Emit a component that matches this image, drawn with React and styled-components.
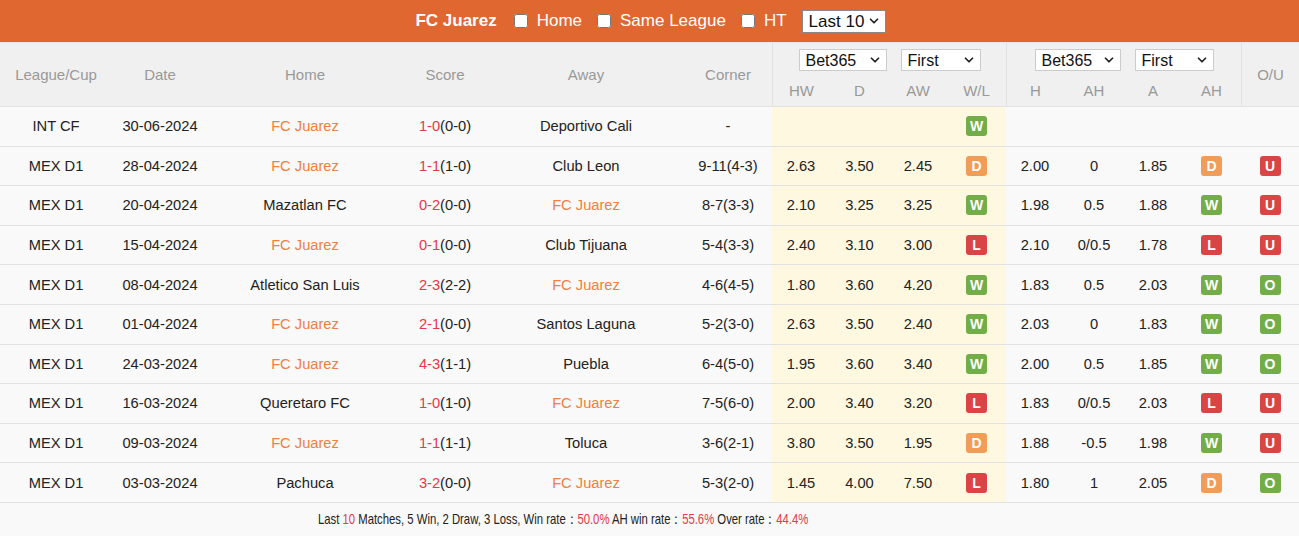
import { ChevronDown } from "lucide-react";
import styled, { createGlobalStyle } from "styled-components";

const COLS = "112px 96px 194px 86px 196px 88px 58px 59px 58px 59px 58px 60px 58px 59px 58px";

const GlobalStyle = createGlobalStyle`
  body {
    margin: 0;
    background: #ffffff;
    font-family: "Liberation Sans", Arial, sans-serif;
  }
`;

const Page = styled.div`
  width: 1299px;
  background: #f9f9f9;
`;

const TitleBar = styled.div`
  height: 42px;
  background: #e0672f;
  display: flex;
  align-items: center;
  justify-content: center;
  gap: 15px;
  color: #fff;
  font-size: 17px;
  padding-left: 2px;
`;

const TeamTitle = styled.span`
  font-weight: bold;
  margin-right: 2px;
`;

const Option = styled.label`
  display: inline-flex;
  align-items: center;
  gap: 9px;

  input {
    margin: 0;
    width: 14px;
    height: 14px;
  }
`;

const SelectWrap = styled.div`
  position: relative;
  width: ${(p) => p.$w}px;
  height: ${(p) => p.$h || 22}px;

  select {
    appearance: none;
    width: 100%;
    height: 100%;
    margin: 0;
    padding: 0 0 0 6px;
    border: 1px solid ${(p) => (p.$dark ? "#888" : "#cccccc")};
    background: #fff;
    color: #111;
    font-family: "Liberation Sans", Arial, sans-serif;
    font-size: ${(p) => p.$fs || 16}px;
    border-radius: 0;
  }

  svg {
    position: absolute;
    right: 5px;
    top: 50%;
    transform: translateY(-50%);
    pointer-events: none;
  }
`;

const HeaderGrid = styled.div`
  display: grid;
  grid-template-columns: ${COLS};
  grid-template-rows: 32px 31px;
  background: #f0f0f0;
  border-top: 1px solid #e6e6e6;
  border-bottom: 1px solid #e2e2e2;
  color: #999;
  font-size: 15px;
`;

const HeadCell = styled.div`
  grid-row: span 2;
  display: flex;
  align-items: center;
  justify-content: center;
  border-left: ${(p) => (p.$edge ? "1px solid #e2e2e2" : "none")};
`;

const GroupSelects = styled.div`
  grid-column: span 4;
  display: flex;
  align-items: flex-start;
  justify-content: center;
  gap: 14px;
  padding-top: 6px;
  border-left: 1px solid #e2e2e2;
`;

const SubHead = styled.div`
  display: flex;
  align-items: center;
  justify-content: center;
  border-left: ${(p) => (p.$edge ? "1px solid #e2e2e2" : "none")};
`;

const Row = styled.div`
  display: grid;
  grid-template-columns: ${COLS};
  height: 39.6px;
  box-sizing: border-box;
  border-bottom: 1px solid #e2e2e2;
  font-size: 14.7px;
  color: #222;
`;

const Cell = styled.div`
  display: flex;
  align-items: center;
  justify-content: center;
  white-space: nowrap;
  background: ${(p) => (p.$band ? "#fef8e1" : "transparent")};
  color: ${(p) => (p.$team ? "#f0803f" : "inherit")};
`;

const ScoreRed = styled.span`
  color: #e8374a;
`;

const BADGE = {
  W: "#72ad47",
  O: "#72ad47",
  D: "#f19d58",
  L: "#d94444",
  U: "#d94444",
};

const Badge = styled.span`
  display: inline-flex;
  align-items: center;
  justify-content: center;
  width: 21px;
  height: 20px;
  border-radius: 3px;
  background: ${(p) => BADGE[p.$v]};
  color: #fff;
  font-weight: bold;
  font-size: 14px;
`;

const Footer = styled.div`
  height: 33px;
  display: flex;
  align-items: center;
  padding-left: 318px;
  font-size: 14.5px;
  color: #222;
`;

/* the stats line is set in a condensed face in the original */
const Condensed = styled.span`
  display: inline-block;
  white-space: nowrap;
  transform: scaleX(0.78);
  transform-origin: left center;
`;

const Red = styled.span`
  color: #e8374a;
`;

const matches = [
  ["INT CF", "30-06-2024", "FC Juarez", "1-0", "(0-0)", "Deportivo Cali", "-", "", "", "", "W", "", "", "", "", "", "h"],
  ["MEX D1", "28-04-2024", "FC Juarez", "1-1", "(1-0)", "Club Leon", "9-11(4-3)", "2.63", "3.50", "2.45", "D", "2.00", "0", "1.85", "D", "U", "h"],
  ["MEX D1", "20-04-2024", "Mazatlan FC", "0-2", "(0-0)", "FC Juarez", "8-7(3-3)", "2.10", "3.25", "3.25", "W", "1.98", "0.5", "1.88", "W", "U", "a"],
  ["MEX D1", "15-04-2024", "FC Juarez", "0-1", "(0-0)", "Club Tijuana", "5-4(3-3)", "2.40", "3.10", "3.00", "L", "2.10", "0/0.5", "1.78", "L", "U", "h"],
  ["MEX D1", "08-04-2024", "Atletico San Luis", "2-3", "(2-2)", "FC Juarez", "4-6(4-5)", "1.80", "3.60", "4.20", "W", "1.83", "0.5", "2.03", "W", "O", "a"],
  ["MEX D1", "01-04-2024", "FC Juarez", "2-1", "(0-0)", "Santos Laguna", "5-2(3-0)", "2.63", "3.50", "2.40", "W", "2.03", "0", "1.83", "W", "O", "h"],
  ["MEX D1", "24-03-2024", "FC Juarez", "4-3", "(1-1)", "Puebla", "6-4(5-0)", "1.95", "3.60", "3.40", "W", "2.00", "0.5", "1.85", "W", "O", "h"],
  ["MEX D1", "16-03-2024", "Queretaro FC", "1-0", "(1-0)", "FC Juarez", "7-5(6-0)", "2.00", "3.40", "3.20", "L", "1.83", "0/0.5", "2.03", "L", "U", "a"],
  ["MEX D1", "09-03-2024", "FC Juarez", "1-1", "(1-1)", "Toluca", "3-6(2-1)", "3.80", "3.50", "1.95", "D", "1.88", "-0.5", "1.98", "W", "U", "h"],
  ["MEX D1", "03-03-2024", "Pachuca", "3-2", "(0-0)", "FC Juarez", "5-3(2-0)", "1.45", "4.00", "7.50", "L", "1.80", "1", "2.05", "D", "O", "a"],
];

const Select = ({ w, h, fs, dark, value }) => (
  <SelectWrap $w={w} $h={h} $fs={fs} $dark={dark}>
    <select defaultValue={value}>
      <option>{value}</option>
    </select>
    <ChevronDown size={14} strokeWidth={3} color="#222" />
  </SelectWrap>
);

const App = () => (
  <Page>
    <GlobalStyle />
    <TitleBar>
      <TeamTitle>FC Juarez</TeamTitle>
      <Option>
        <input type="checkbox" />
        Home
      </Option>
      <Option>
        <input type="checkbox" />
        Same League
      </Option>
      <Option>
        <input type="checkbox" />
        HT
      </Option>
      <Select w={84} h={23} fs={17} dark value="Last 10" />
    </TitleBar>

    <HeaderGrid>
      <HeadCell>League/Cup</HeadCell>
      <HeadCell>Date</HeadCell>
      <HeadCell>Home</HeadCell>
      <HeadCell>Score</HeadCell>
      <HeadCell>Away</HeadCell>
      <HeadCell>Corner</HeadCell>
      <GroupSelects>
        <Select w={88} value="Bet365" />
        <Select w={80} value="First" />
      </GroupSelects>
      <GroupSelects>
        <Select w={86} value="Bet365" />
        <Select w={79} value="First" />
      </GroupSelects>
      <HeadCell $edge>O/U</HeadCell>
      <SubHead $edge>HW</SubHead>
      <SubHead>D</SubHead>
      <SubHead>AW</SubHead>
      <SubHead>W/L</SubHead>
      <SubHead $edge>H</SubHead>
      <SubHead>AH</SubHead>
      <SubHead>A</SubHead>
      <SubHead>AH</SubHead>
    </HeaderGrid>

    {matches.map((m) => (
      <Row key={m[1]}>
        <Cell>{m[0]}</Cell>
        <Cell>{m[1]}</Cell>
        <Cell $team={m[16] === "h"}>{m[2]}</Cell>
        <Cell>
          <ScoreRed>{m[3]}</ScoreRed>
          {m[4]}
        </Cell>
        <Cell $team={m[16] === "a"}>{m[5]}</Cell>
        <Cell>{m[6]}</Cell>
        <Cell $band>{m[7]}</Cell>
        <Cell $band>{m[8]}</Cell>
        <Cell $band>{m[9]}</Cell>
        <Cell $band>{m[10] && <Badge $v={m[10]}>{m[10]}</Badge>}</Cell>
        <Cell>{m[11]}</Cell>
        <Cell>{m[12]}</Cell>
        <Cell>{m[13]}</Cell>
        <Cell>{m[14] && <Badge $v={m[14]}>{m[14]}</Badge>}</Cell>
        <Cell>{m[15] && <Badge $v={m[15]}>{m[15]}</Badge>}</Cell>
      </Row>
    ))}

    <Footer>
      <Condensed>
        Last <Red>10</Red> Matches, 5 Win, 2 Draw, 3 Loss, Win rate：<Red>50.0%</Red> AH win
        rate：<Red>55.6%</Red> Over rate：<Red>44.4%</Red>
      </Condensed>
    </Footer>
  </Page>
);

export default App;
